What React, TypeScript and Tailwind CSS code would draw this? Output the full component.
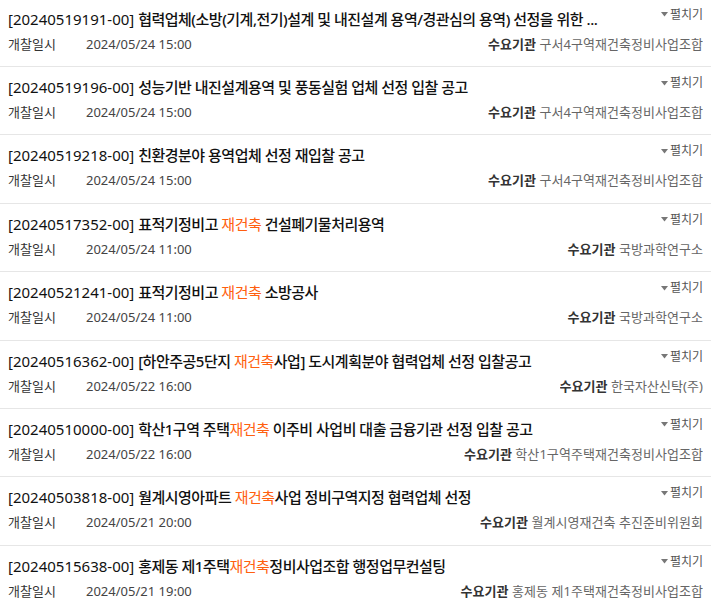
import { Fragment } from 'react';

interface Bid {
  no: string;
  title: string;
  date: string;
  org: string;
}

const bids: Bid[] = [
  {
    no: '20240519191-00',
    title: '협력업체(소방(기계,전기)설계 및 내진설계 용역/경관심의 용역) 선정을 위한 ...',
    date: '2024/05/24 15:00',
    org: '구서4구역재건축정비사업조합',
  },
  {
    no: '20240519196-00',
    title: '성능기반 내진설계용역 및 풍동실험 업체 선정 입찰 공고',
    date: '2024/05/24 15:00',
    org: '구서4구역재건축정비사업조합',
  },
  {
    no: '20240519218-00',
    title: '친환경분야 용역업체 선정 재입찰 공고',
    date: '2024/05/24 15:00',
    org: '구서4구역재건축정비사업조합',
  },
  {
    no: '20240517352-00',
    title: '표적기정비고 재건축 건설폐기물처리용역',
    date: '2024/05/24 11:00',
    org: '국방과학연구소',
  },
  {
    no: '20240521241-00',
    title: '표적기정비고 재건축 소방공사',
    date: '2024/05/24 11:00',
    org: '국방과학연구소',
  },
  {
    no: '20240516362-00',
    title: '[하안주공5단지 재건축사업] 도시계획분야 협력업체 선정 입찰공고',
    date: '2024/05/22 16:00',
    org: '한국자산신탁(주)',
  },
  {
    no: '20240510000-00',
    title: '학산1구역 주택재건축 이주비 사업비 대출 금융기관 선정 입찰 공고',
    date: '2024/05/22 16:00',
    org: '학산1구역주택재건축정비사업조합',
  },
  {
    no: '20240503818-00',
    title: '월계시영아파트 재건축사업 정비구역지정 협력업체 선정',
    date: '2024/05/21 20:00',
    org: '월계시영재건축 추진준비위원회',
  },
  {
    no: '20240515638-00',
    title: '홍제동 제1주택재건축정비사업조합 행정업무컨설팅',
    date: '2024/05/21 19:00',
    org: '홍제동 제1주택재건축정비사업조합',
  },
];

const KEYWORD = '재건축';

// highlight the search keyword in orange
function Highlight({ text }: { text: string }) {
  const parts = text.split(KEYWORD);
  return (
    <>
      {parts.map((part, i) => (
        <Fragment key={i}>
          {part}
          {i < parts.length - 1 && <span className="text-[#ff5f0f] font-normal">{KEYWORD}</span>}
        </Fragment>
      ))}
    </>
  );
}

function BidRow({ bid }: { bid: Bid }) {
  return (
    <li className="border-b border-[#e6e6e6] px-2 pt-[9px] pb-[12.4px]">
      <div className="flex items-start gap-4">
        <p className="flex-1 min-w-0 truncate text-[15px] leading-[22px] text-[#111]">
          <span>[{bid.no}]</span>{' '}
          <span className="font-medium tracking-[-0.5px]">
            <Highlight text={bid.title} />
          </span>
        </p>
        <button className="mt-[-1px] flex shrink-0 items-center gap-[2px] text-[12px] leading-4 text-[#555]">
          <svg width="7" height="5" viewBox="0 0 7 5">
            <path d="M0 0h7L3.5 4.5z" fill="#777" />
          </svg>
          펼치기
        </button>
      </div>
      <div className="mt-[4px] flex items-center justify-between text-[13px] leading-5">
        <div className="flex items-center">
          <span className="w-[78px] text-[#333]">개찰일시</span>
          <span className="text-[#444]">{bid.date}</span>
        </div>
        <div className="truncate tracking-[0.05px]">
          <span className="font-bold text-[#333]">수요기관</span>{' '}
          <span className="text-[#666]">{bid.org}</span>
        </div>
      </div>
    </li>
  );
}

export default function App() {
  return (
    <div
      className="h-[609px] w-full overflow-hidden bg-white"
      style={{ fontFamily: '"Noto Sans", "Noto Sans CJK KR", sans-serif' }}
    >
      <ul className="mt-[-1.4px]">
        {bids.map((bid) => (
          <BidRow key={bid.no} bid={bid} />
        ))}
      </ul>
    </div>
  );
}
